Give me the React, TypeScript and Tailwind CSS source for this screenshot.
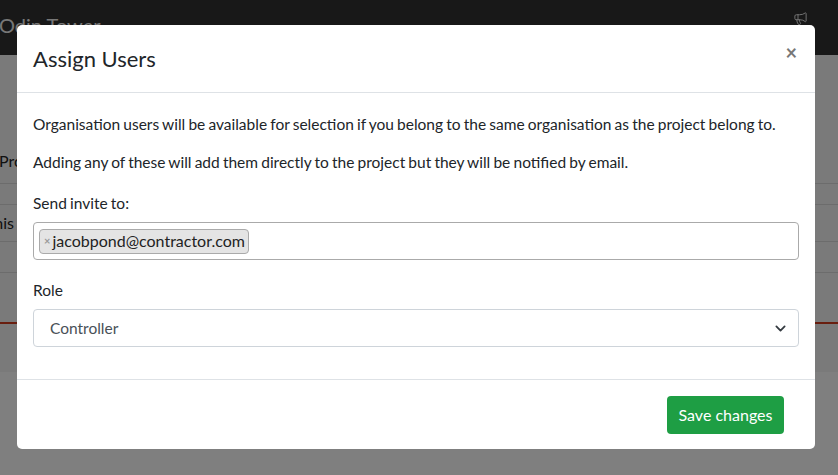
import * as React from "react"
import { Megaphone } from "lucide-react"

const font = { fontFamily: "Lato, 'Open Sans', sans-serif" }

function PageBehind() {
  return (
    <div className="min-h-[475px] bg-white">
      <div className="flex h-[55px] items-center justify-between bg-[#303030] pr-[30px] text-[20px] text-[#eeeeee]">
        <span className="-ml-[1px] -mt-[6px]">Odin Tower</span>
        <Megaphone className="-mt-[18px] size-[15px]" strokeWidth={1.5} />
      </div>
      <div className="bg-[#f4f4f4] pb-[48px]">
        <div className="flex h-[128px] items-end pb-[10px] text-[16px] text-[#222]">
          <span className="-ml-[1px]">Project</span>
        </div>
        <div className="h-[21px] border-t border-[#d8d8d8]" />
        <div className="flex h-[37px] items-center border-t border-[#d8d8d8] text-[16px] text-[#222]">
          <span className="-ml-[15px]">This Project</span>
        </div>
        <div className="h-[31px] border-t border-[#d8d8d8]" />
        <div className="h-[50px] border-t border-[#d8d8d8]" />
        <div className="h-[2px] bg-[#d23c1f]" />
      </div>
    </div>
  )
}

function AssignUsersModal() {
  return (
    <div className="fixed inset-0 bg-black/50">
      <div className="ml-[17px] mt-[25px] w-[798px] rounded-[5px] bg-white text-[#212529]">
        <div className="flex h-[68px] items-center justify-between border-b border-[#dee2e6] pl-4 pr-[18px]">
          <h5 className="text-[22px] leading-none">Assign Users</h5>
          <button className="-mt-[14px] text-[20px] font-bold leading-none text-[#777]">×</button>
        </div>
        <div className="px-4 pb-[32px] pt-[19px] text-[15.5px] leading-6 [word-spacing:-0.8px]">
          <p className="whitespace-nowrap">
            Organisation users will be available for selection if you belong to the same
            organisation as the project belong to.
          </p>
          <p className="mt-[14px]">
            Adding any of these will add them directly to the project but they will be notified by
            email.
          </p>
          <label className="mt-[17px] block">Send invite to:</label>
          <div className="mt-[7px] flex h-[38px] items-center rounded-[4px] border border-[#aaaaaa] px-[5px]">
            <span className="flex h-[25px] items-center gap-[2px] rounded-[4px] border border-[#aaaaaa] bg-[#e4e4e4] pl-[4px] pr-[3px] text-[16px] text-[#222]">
              <span className="text-[11px] font-bold text-[#999]">×</span>
              jacobpond@contractor.com
            </span>
          </div>
          <label className="mt-[18px] block">Role</label>
          <div className="mt-[7px] flex h-[38px] items-center justify-between rounded-[4px] border border-[#ced4da] pl-[16px] pr-[12px] text-[#495057]">
            <span>Controller</span>
            <svg viewBox="0 0 16 16" className="size-[11px]" fill="none" stroke="#343a40" strokeWidth="2.6" strokeLinecap="round" strokeLinejoin="round">
              <path d="M2 5l6 6 6-6" />
            </svg>
          </div>
        </div>
        <div className="flex justify-end border-t border-[#dee2e6] pb-[15px] pr-[31px] pt-4">
          <button className="h-[38px] w-[117px] rounded-[4px] bg-[#1e9e44] text-[16px] text-white">
            Save changes
          </button>
        </div>
      </div>
    </div>
  )
}

export default function App() {
  return (
    <div style={font} className="relative h-[475px] overflow-hidden">
      <PageBehind />
      <AssignUsersModal />
    </div>
  )
}
